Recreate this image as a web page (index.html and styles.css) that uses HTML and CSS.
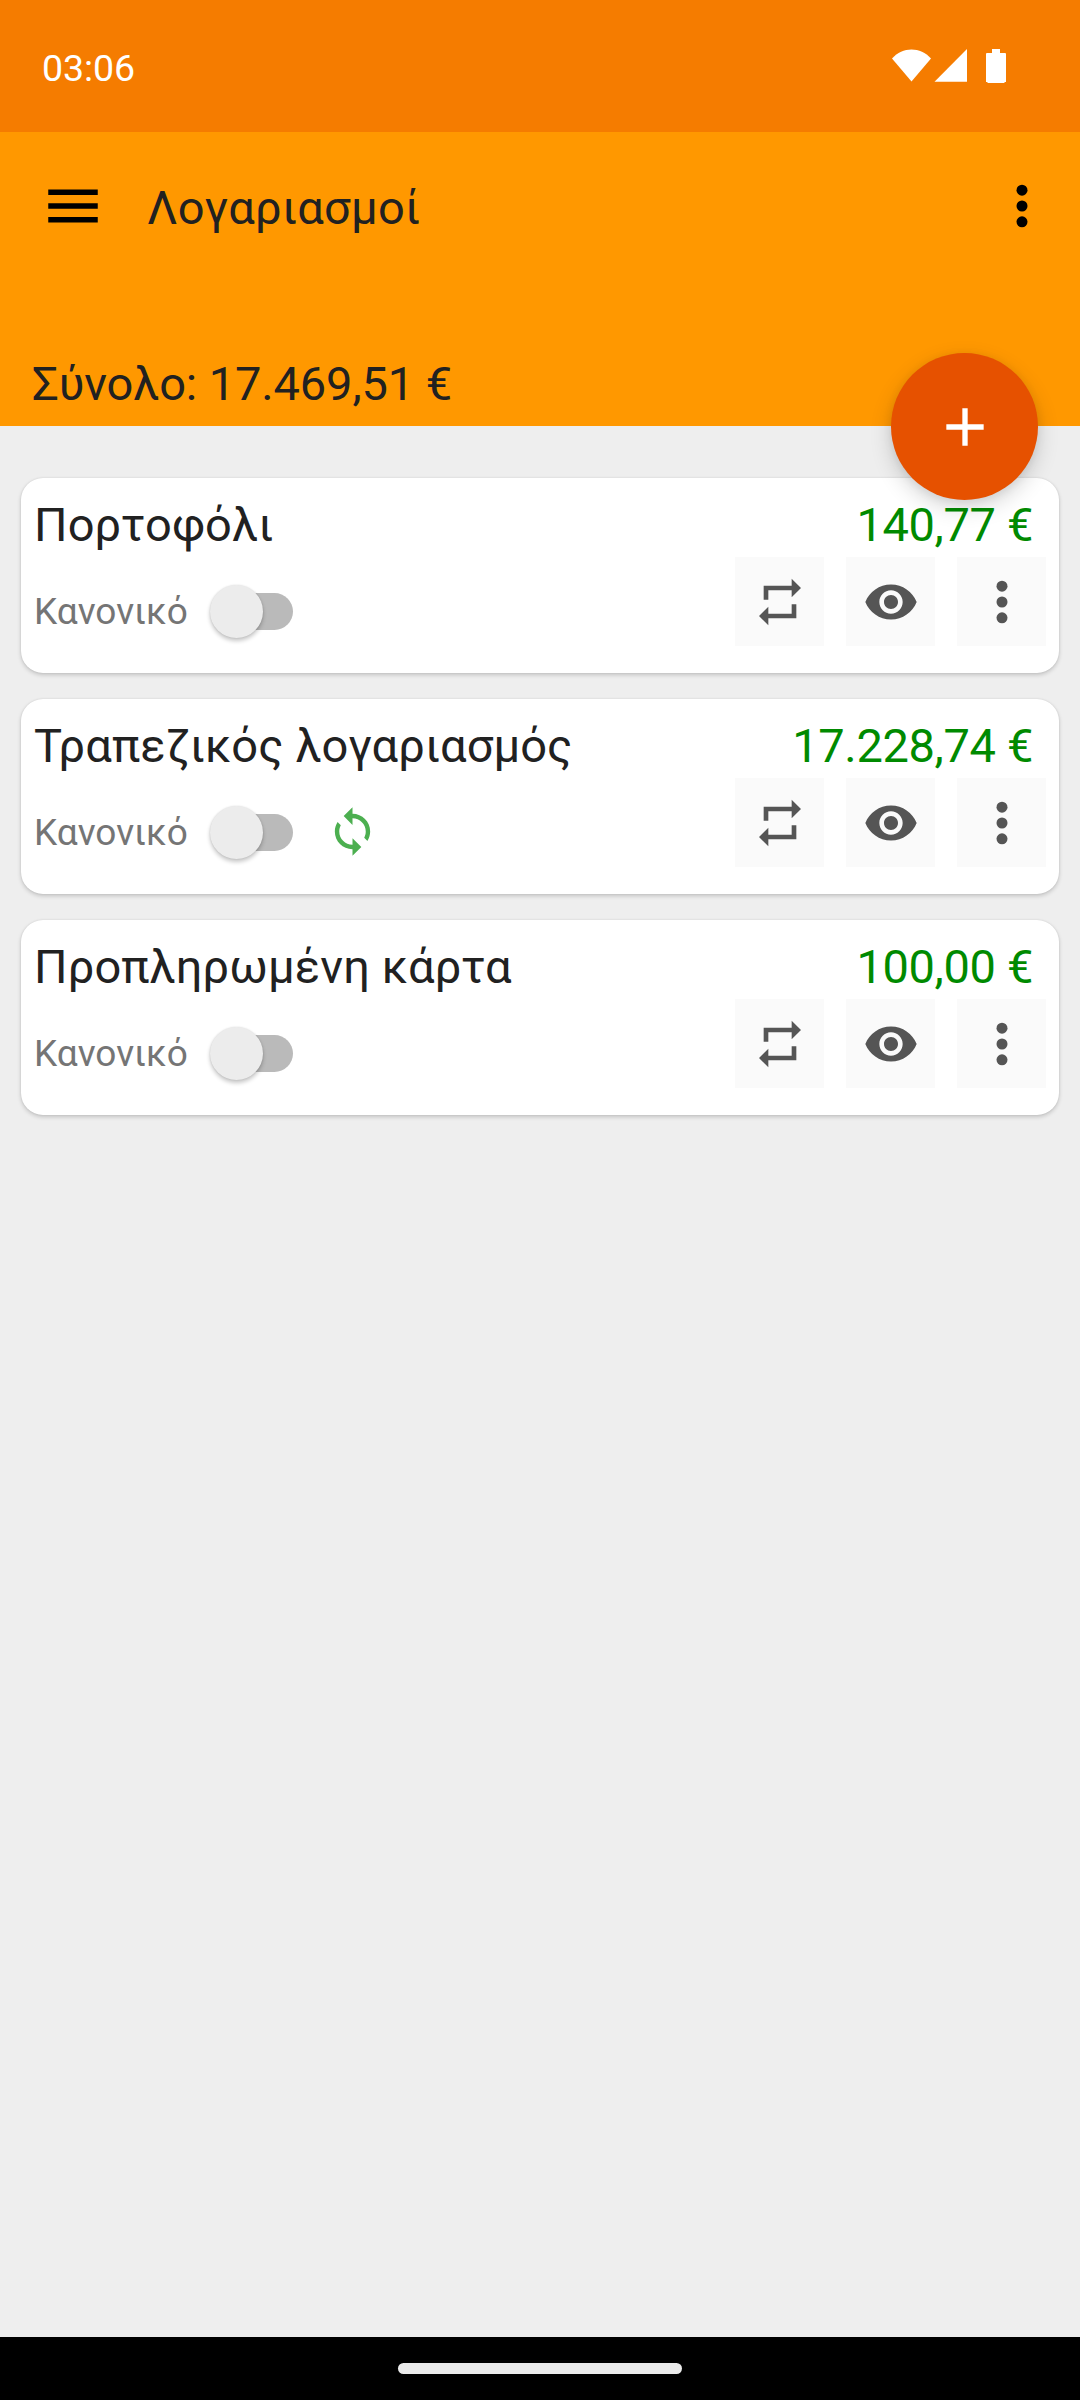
FILE: index.html
```html
<!DOCTYPE html>
<html lang="el">
<head>
<meta charset="utf-8">
<title>Λογαριασμοί</title>
<link rel="stylesheet" href="styles.css">
</head>
<body>
<svg class="sprite" aria-hidden="true">
  <symbol id="repeat" viewBox="0 0 24 24"><path d="M7 7h10v3l4-4-4-4v3H5v6h2V7zm10 10H7v-3l-4 4 4 4v-3h12v-6h-2v4z"/></symbol>
  <symbol id="eye" viewBox="0 0 24 24"><path d="M12 4.500C7 4.500 2.730 7.610 1 12c1.730 4.390 6 7.500 11 7.500s9.270-3.110 11-7.500c-1.730-4.390-6-7.500-11-7.500zM12 17c-2.760 0-5-2.240-5-5s2.240-5 5-5 5 2.240 5 5-2.240 5-5 5zm0-8c-1.660 0-3 1.340-3 3s1.340 3 3 3 3-1.340 3-3-1.340-3-3-3z"/></symbol>
  <symbol id="more" viewBox="0 0 66 66"><circle cx="33" cy="17.200" r="5.500"/><circle cx="33" cy="33" r="5.500"/><circle cx="33" cy="48.800" r="5.500"/></symbol>
  <symbol id="sync" viewBox="0 0 24 24"><path d="M12 4V1L8 5l4 4V6c3.310 0 6 2.690 6 6 0 1.010-.25 1.970-.7 2.800l1.460 1.460C19.540 15.030 20 13.570 20 12c0-4.420-3.580-8-8-8zm0 14c-3.310 0-6-2.690-6-6 0-1.010.25-1.970.7-2.800L5.240 7.740C4.460 8.970 4 10.430 4 12c0 4.420 3.580 8 8 8v3l4-4-4-4v3z"/></symbol>
</svg>
<div class="screen">
  <div class="status">
    <span class="clock">03:06</span>
    <svg class="status-icons" viewBox="0 0 116 36">
      <path d="M0 9.500C10.500-2.500 28.500-2.500 39 9.500L19.500 32.500z"/>
      <path d="M75 0v32.700H42.500z"/>
      <path d="M100 0h8v4h5.500v.5h.5v28.500h-1.500v1h-17v-1H94V4.500h.5V4h5.500z"/>
    </svg>
  </div>
  <header class="header">
    <div class="toolbar">
      <svg class="menu" viewBox="0 0 24 24"><path d="M3 18h18v-2H3v2zm0-5h18v-2H3v2zm0-7v2h18V6H3z"/></svg>
      <h1 class="title">Λογαριασμοί</h1>
      <svg class="overflow"><use href="#more"/></svg>
    </div>
    <div class="total">Σύνολο: 17.469,51 €</div>
    <button class="fab" aria-label="Προσθήκη"><svg viewBox="0 0 24 24"><path d="M19 13h-6v6h-2v-6H5v-2h6V5h2v6h6v2z"/></svg></button>
  </header>
  <main class="list">
    <section class="card">
      <div class="row"><span class="name">Πορτοφόλι</span><span class="amount">140,77 €</span></div>
      <div class="row controls">
        <span class="label">Κανονικό</span><span class="switch"><i class="thumb"></i></span>
        <div class="actions"><button class="action"><svg><use href="#repeat"/></svg></button><button class="action"><svg><use href="#eye"/></svg></button><button class="action"><svg class="dots"><use href="#more"/></svg></button></div>
      </div>
    </section>
    <section class="card">
      <div class="row"><span class="name">Τραπεζικός λογαριασμός</span><span class="amount">17.228,74 €</span></div>
      <div class="row controls">
        <span class="label">Κανονικό</span><span class="switch"><i class="thumb"></i></span><svg class="sync"><use href="#sync"/></svg>
        <div class="actions"><button class="action"><svg><use href="#repeat"/></svg></button><button class="action"><svg><use href="#eye"/></svg></button><button class="action"><svg class="dots"><use href="#more"/></svg></button></div>
      </div>
    </section>
    <section class="card">
      <div class="row"><span class="name">Προπληρωμένη κάρτα</span><span class="amount">100,00 €</span></div>
      <div class="row controls">
        <span class="label">Κανονικό</span><span class="switch"><i class="thumb"></i></span>
        <div class="actions"><button class="action"><svg><use href="#repeat"/></svg></button><button class="action"><svg><use href="#eye"/></svg></button><button class="action"><svg class="dots"><use href="#more"/></svg></button></div>
      </div>
    </section>
  </main>
  <nav class="navbar"><span class="pill"></span></nav>
</div>
</body>
</html>
```
FILE: styles.css
```css
* { box-sizing: border-box; }
body { margin: 0; background: #eee; font-family: Roboto, "Noto Sans", sans-serif; color: #212121; }
button { border: 0; padding: 0; margin: 0; font: inherit; }
svg { display: block; flex: none; }
.sprite { width: 0; height: 0; position: absolute; }
.screen { width: 1080px; height: 2400px; display: flex; flex-direction: column; }

.status { height: 132px; background: #f57c00; display: flex; justify-content: space-between; align-items: flex-start; padding: 0 72px 0 42px; }
.clock { color: #fff; font-size: 37.5px; line-height: 46px; margin-top: 45px; letter-spacing: -.1px; white-space: nowrap; }
.status-icons { width: 116px; height: 36px; margin-top: 49px; fill: #fff; }

.header { height: 294px; background: #ff9800; display: flex; flex-direction: column; justify-content: space-between; position: relative; }
.toolbar { display: flex; align-items: center; height: 147px; padding: 0 25px 0 40px; }
.menu { width: 66px; height: 66px; }
.title { margin: 4px auto 0 41px; font-size: 47px; line-height: 58px; font-weight: 400; letter-spacing: .3px; white-space: nowrap; }
.overflow { width: 66px; height: 66px; }
.total { padding: 0 32px 14px; font-size: 47px; line-height: 56px; letter-spacing: -.12px; white-space: nowrap; }
.fab { position: absolute; right: 42px; bottom: -74px; width: 147px; height: 147px; border-radius: 50%; background: #e65100; display: grid; place-items: center; box-shadow: 0 8px 22px rgba(0,0,0,.16), 0 2px 10px rgba(0,0,0,.08); }
.fab svg { width: 64px; height: 64px; fill: #fff; }

.list { flex: 1; padding: 52px 21px 0; display: flex; flex-direction: column; gap: 26px; }
.card { height: 195px; background: #fff; border-radius: 22px; padding: 18px 13px 0 13px; box-shadow: 0 2px 4px rgba(0,0,0,.18), 0 0 2px rgba(0,0,0,.1); }
.row { display: flex; align-items: center; }
.name, .amount { font-size: 47px; line-height: 58px; white-space: nowrap; }
.name { letter-spacing: .12px; }
.amount { margin-left: auto; padding-right: 13px; color: #008a00; letter-spacing: -.35px; }
.controls { height: 89px; margin-top: 3px; }
.label { font-size: 37px; line-height: 46px; color: #757575; margin-top: 20px; width: 157px; white-space: nowrap; }
.switch { width: 76px; height: 37px; margin: 20px 0 0 26px; border-radius: 19px; background: #bababa; position: relative; }
.thumb { position: absolute; left: -7px; top: -8px; width: 53px; height: 53px; border-radius: 50%; background: #ececec; box-shadow: 0 3px 4px rgba(0,0,0,.22), 0 0 2px rgba(0,0,0,.12); }
.sync { width: 53px; height: 53px; margin: 18px 0 0 33px; fill: #4caf50; }
.actions { margin-left: auto; display: flex; gap: 22px; }
.action { width: 89px; height: 89px; background: #fafafa; display: grid; place-items: center; }
.action svg { width: 56px; height: 56px; fill: #555; }
.action .dots { width: 66px; height: 66px; }

.navbar { height: 63px; background: #000; display: flex; justify-content: center; padding-top: 26px; }
.pill { width: 284px; height: 11px; border-radius: 6px; background: #ebebeb; }
```
